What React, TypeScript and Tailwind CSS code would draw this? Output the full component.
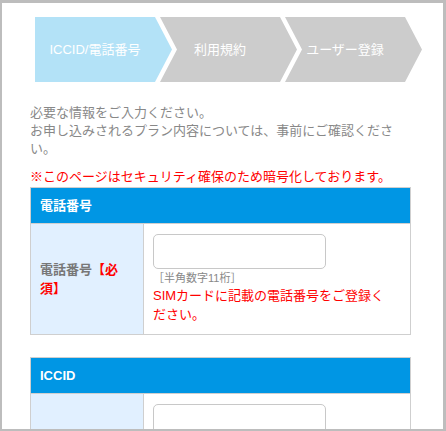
import React from "react";

const font = { fontFamily: '"Liberation Sans", "Noto Sans CJK JP", sans-serif' };

function Steps() {
  return (
    <div className="flex ml-[33px] h-[65px]">
      <div className="w-[137px] h-full bg-[#b3e2f7] flex items-center [clip-path:polygon(0_0,120px_0,137px_50%,120px_100%,0_100%)]">
        <span className="w-[120px] text-center text-white text-[13px]">ICCID/電話番号</span>
      </div>
      <div className="w-[137px] h-full ml-[-12px] bg-[#cccccc] flex items-center [clip-path:polygon(0_0,120px_0,137px_50%,120px_100%,0_100%,17px_50%)]">
        <span className="w-[120px] text-center text-white text-[13px]">利用規約</span>
      </div>
      <div className="w-[137px] h-full ml-[-12px] bg-[#cccccc] flex items-center [clip-path:polygon(0_0,120px_0,137px_50%,120px_100%,0_100%,17px_50%)]">
        <span className="w-[120px] text-center text-white text-[13px]">ユーザー登録</span>
      </div>
    </div>
  );
}

function Section({ title, label, note }: { title: string; label?: React.ReactNode; note?: boolean }) {
  return (
    <div className="w-[381px] border border-[#cfcfcf]">
      <div className="h-[35px] bg-[#0096e4] flex items-center pl-[9px] text-white font-bold text-[13px]">{title}</div>
      <div className="flex border-t border-[#cfcfcf]">
        <div className="w-[113px] shrink-0 bg-[#e1f0ff] border-r border-[#cfcfcf] pl-[9px] pr-[14px] flex items-center text-[13px] font-bold leading-[19px] text-[#777]">
          {label}
        </div>
        <div className="flex-1 pl-[9px] pr-[20px] pt-[10px] pb-[10px]">
          <div className="w-[173px] h-[35px] rounded-[5px] border border-[#c8c8c8] bg-white" />
          {note && (
            <>
              <div className="text-[11px] leading-[16px] text-[#888] mt-[1px]">［半角数字11桁］</div>
              <div className="text-[13px] leading-[19px] text-[#ff0000]">SIMカードに記載の電話番号をご登録ください。</div>
            </>
          )}
        </div>
      </div>
    </div>
  );
}

export default function App() {
  return (
    <div style={font} className="w-[446px] h-[431px] overflow-hidden bg-white border-l-2 border-r-[3px] border-t-[3px] border-b-2 border-[#bdbdbd]">
      <div className="pt-[14px]">
        <Steps />
      </div>
      <div className="pl-[28px] mt-[22px]">
        <p className="w-[381px] text-[13px] leading-[18px] text-[#888]">
          必要な情報をご入力ください。
          <br />
          お申し込みされるプラン内容については、事前にご確認ください。
        </p>
        <p className="mt-[10px] text-[13px] leading-[18px] text-[#ff0000]">※このページはセキュリティ確保のため暗号化しております。</p>
        <div className="mt-[1px]">
          <Section
            title="電話番号"
            note
            label={
              <span>
                電話番号<span className="text-[#ff0000]">【必須】</span>
              </span>
            }
          />
        </div>
        <div className="mt-[22px]">
          <Section title="ICCID" label={<span></span>} />
        </div>
      </div>
    </div>
  );
}
